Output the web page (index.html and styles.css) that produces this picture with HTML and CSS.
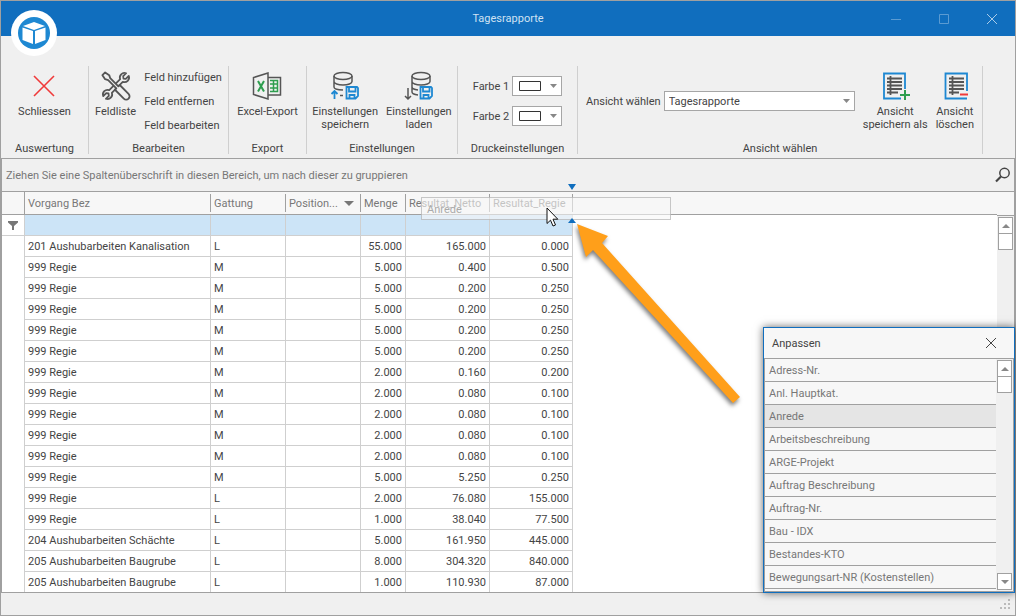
FILE: index.html
```html
<!DOCTYPE html>
<html lang="de">
  <head>
    <meta charset="UTF-8" />
    <meta name="viewport" content="width=device-width, initial-scale=1.0" />
    <title>Tagesrapporte</title>
    <link rel="stylesheet" href="styles.css">
  </head>
  <body>
    <div class="window">
      <header class="titlebar">
        <svg class="logo" viewBox="0 0 46 46" aria-hidden="true">
          <circle cx="23" cy="23" r="23" fill="#fff" />
          <circle cx="23" cy="23" r="16" fill="#1e88d2" />
          <path d="M23 12l11 4-11 4-11-4z M11.500 17.500l10.500 3.500v13l-10.500-4z M34.500 17.500l-10.500 3.500v13l10.500-4z" fill="#fff" />
        </svg>
        <h1 class="title">Tagesrapporte</h1>
        <div class="winButtons">
          <button type="button" aria-label="Minimieren"><svg viewBox="0 0 12 12"><path d="M1 6.500h10" /></svg></button>
          <button type="button" aria-label="Maximieren"><svg viewBox="0 0 12 12"><path d="M1.500 1.500h9v9h-9z" /></svg></button>
          <button type="button" class="winClose" aria-label="Fenster schliessen"><svg viewBox="0 0 12 12"><path d="M1 1l10 10M11 1L1 11" /></svg></button>
        </div>
      </header>

      <div class="ribbon">
        <section class="group group--close">
          <div class="groupContent">
            <button type="button" class="bigButton">
              <svg viewBox="0 0 32 32"><path d="M6 6l20 20M26 6L6 26" stroke="#f03a3a" stroke-width="1.600" /></svg>
              Schliessen
            </button>
          </div>
          <h2>Auswertung</h2>
        </section>

        <section class="group group--edit">
          <div class="groupContent">
            <button type="button" class="bigButton">
              <svg viewBox="0 0 32 32" stroke="#555" stroke-width="1.900" stroke-linejoin="round">
                <path transform="translate(16 16) rotate(45) scale(.92)" d="M-2-8.400A5 5 0 0 1-2-17.600V-13L0-11.500 2-13V-17.600A5 5 0 0 1 2-8.400V8.400A5 5 0 0 1 2 17.600V13L0 11.500-2 13V17.600A5 5 0 0 1-2 8.400z" />
                <path transform="translate(16 16) rotate(-45) scale(.96)" d="M-2-18H2L3-13 1.500-10V2H3.500V15a3.500 3.500 0 0 1-7 0V2H-1.500V-10L-3-13z" fill="#f0f0f0" />
              </svg>
              Feldliste
            </button>
            <div class="linkColumn">
              <button type="button">Feld hinzufügen</button>
              <button type="button">Feld entfernen</button>
              <button type="button">Feld bearbeiten</button>
            </div>
          </div>
          <h2>Bearbeiten</h2>
        </section>

        <section class="group group--export">
          <div class="groupContent">
            <button type="button" class="bigButton">
              <svg viewBox="0 0 32 32" stroke="#555" stroke-width="1.500">
                <path d="M17 3L2.500 7.500v17L17 29z M17 7.500h12.500v17.500H17" />
                <path d="M7 11l6 10.500M13 11L7 21.500" stroke="#2e9e4f" stroke-width="2" />
                <path d="M19 10.500h7.500v11H19M22.500 10.500v11M19 14h7.500M19 18h7.500" stroke="#2e9e4f" />
              </svg>
              Excel-Export
            </button>
          </div>
          <h2>Export</h2>
        </section>

        <section class="group group--settings">
          <div class="groupContent">
            <button type="button" class="bigButton">
              <svg viewBox="0 0 32 32" stroke="#555" stroke-width="1.500">
                <ellipse cx="14" cy="6" rx="9" ry="3.500" />
                <path d="M5 6v5.500c0 2 4 3.500 9 3.500s9-1.500 9-3.500V6M5 14v3c0 1.500 3 2.800 9 3M5 11v6M11 25.500h3" />
                <path d="M5.500 29v-8M2.500 24l3-3 3 3M17.500 17H28l1 1v8l-2.500 2.500h-9zM20 17v4.500h6.500V17M20.500 28.500V25h5v3.500" stroke="#1e88d2" stroke-width="1.800" />
              </svg>
              Einstellungen<br>speichern
            </button>
            <button type="button" class="bigButton">
              <svg viewBox="0 0 32 32" stroke="#555" stroke-width="1.500">
                <ellipse cx="18" cy="6" rx="9" ry="3.500" />
                <path d="M9 6v5.500c0 2 4 3.500 9 3.500s9-1.500 9-3.500V6M9 11v6c0 1.500 2 2.500 6 3M9 17v5c0 1.500 2 2.500 6 3M5 18v11M2 26l3 3 3-3" />
                <path d="M17.500 17H28l1 1v8l-2.500 2.500h-9zM20 17v4.500h6.500V17M20.500 28.500V25h5v3.500" stroke="#1e88d2" stroke-width="1.800" />
              </svg>
              Einstellungen<br>laden
            </button>
          </div>
          <h2>Einstellungen</h2>
        </section>

        <section class="group group--print">
          <div class="groupContent groupContent--rows">
            <div class="field">
              <label for="farbe1">Farbe 1</label>
              <select id="farbe1" class="colorSelect"><option value="#ffffff" aria-label="Weiss"></option></select>
            </div>
            <div class="field">
              <label for="farbe2">Farbe 2</label>
              <select id="farbe2" class="colorSelect"><option value="#ffffff" aria-label="Weiss"></option></select>
            </div>
          </div>
          <h2>Druckeinstellungen</h2>
        </section>

        <section class="group group--view">
          <div class="groupContent">
            <div class="field field--view">
              <label for="ansicht">Ansicht wählen</label>
              <select id="ansicht" class="viewSelect"><option>Tagesrapporte</option></select>
            </div>
            <button type="button" class="bigButton">
              <svg viewBox="0 0 32 32" stroke="#555" stroke-width="1.800">
                <path d="M26 19V3.500H5v25h17" stroke="#1e88d2" />
                <path d="M8 8.500h15M8 12h15M8 15.500h15M8 19h15M8 22.500h11M11.500 6v19" />
                <path d="M26 20v10M21 25h10" stroke="#2e9e4f" stroke-width="2" />
              </svg>
              Ansicht<br>speichern als
            </button>
            <button type="button" class="bigButton">
              <svg viewBox="0 0 32 32" stroke="#555" stroke-width="1.800">
                <path d="M28 21V3.500H6.500v25H28" stroke="#1e88d2" />
                <path d="M10 8.500h15M10 12h15M10 15.500h15M10 19h15M10 22.500h10M13.500 6v19" />
                <path d="M21 24.500h8" stroke="#f03a3a" stroke-width="2" />
              </svg>
              Ansicht<br>löschen
            </button>
          </div>
          <h2>Ansicht wählen</h2>
        </section>
      </div>

      <main class="grid">
        <div class="groupPanel">
          <span>Ziehen Sie eine Spaltenüberschrift in diesen Bereich, um nach dieser zu gruppieren</span>
          <button type="button" class="searchButton" aria-label="Suchen">
            <svg viewBox="0 0 16 16"><circle cx="9.500" cy="6" r="4.700" stroke-width="1.500" /><path d="M6 9.500L1 14.500" stroke-width="2.200" /></svg>
          </button>
        </div>

        <div class="gridBody">
          <table class="rows">
            <colgroup>
              <col class="colIndicator" />
              <col class="colVorgang" />
              <col class="colGattung" />
              <col class="colPosition" />
              <col class="colMenge" />
              <col class="colNetto" />
              <col class="colRegie" />
              <col />
            </colgroup>
            <thead>
              <tr>
                <th class="indicator"></th>
                <th>Vorgang Bez</th>
                <th>Gattung</th>
                <th><span class="sorted">Position... <i class="sortMark"></i></span></th>
                <th>Menge</th>
                <th>Resultat_Netto</th>
                <th>Resultat_Regie</th>
                <th class="filler"></th>
              </tr>
            </thead>
            <tbody>
              <tr class="filterRow">
                <td class="indicator"><svg viewBox="0 0 10 9"><path d="M0 0h10v1.500L6 5v4H4V5L0 1.500z" fill="#777" /></svg></td>
                <td></td><td></td><td></td><td></td><td></td><td></td><td class="filler"></td>
              </tr>
              <tr><td></td><td>201 Aushubarbeiten Kanalisation</td><td>L</td><td></td><td>55.000</td><td>165.000</td><td>0.000</td><td></td></tr>
              <tr><td></td><td>999 Regie</td><td>M</td><td></td><td>5.000</td><td>0.400</td><td>0.500</td><td></td></tr>
              <tr><td></td><td>999 Regie</td><td>M</td><td></td><td>5.000</td><td>0.200</td><td>0.250</td><td></td></tr>
              <tr><td></td><td>999 Regie</td><td>M</td><td></td><td>5.000</td><td>0.200</td><td>0.250</td><td></td></tr>
              <tr><td></td><td>999 Regie</td><td>M</td><td></td><td>5.000</td><td>0.200</td><td>0.250</td><td></td></tr>
              <tr><td></td><td>999 Regie</td><td>M</td><td></td><td>5.000</td><td>0.200</td><td>0.250</td><td></td></tr>
              <tr><td></td><td>999 Regie</td><td>M</td><td></td><td>2.000</td><td>0.160</td><td>0.200</td><td></td></tr>
              <tr><td></td><td>999 Regie</td><td>M</td><td></td><td>2.000</td><td>0.080</td><td>0.100</td><td></td></tr>
              <tr><td></td><td>999 Regie</td><td>M</td><td></td><td>2.000</td><td>0.080</td><td>0.100</td><td></td></tr>
              <tr><td></td><td>999 Regie</td><td>M</td><td></td><td>2.000</td><td>0.080</td><td>0.100</td><td></td></tr>
              <tr><td></td><td>999 Regie</td><td>M</td><td></td><td>2.000</td><td>0.080</td><td>0.100</td><td></td></tr>
              <tr><td></td><td>999 Regie</td><td>M</td><td></td><td>5.000</td><td>5.250</td><td>0.250</td><td></td></tr>
              <tr><td></td><td>999 Regie</td><td>L</td><td></td><td>2.000</td><td>76.080</td><td>155.000</td><td></td></tr>
              <tr><td></td><td>999 Regie</td><td>L</td><td></td><td>1.000</td><td>38.040</td><td>77.500</td><td></td></tr>
              <tr><td></td><td>204 Aushubarbeiten Schächte</td><td>L</td><td></td><td>5.000</td><td>161.950</td><td>445.000</td><td></td></tr>
              <tr><td></td><td>205 Aushubarbeiten Baugrube</td><td>L</td><td></td><td>8.000</td><td>304.320</td><td>840.000</td><td></td></tr>
              <tr><td></td><td>205 Aushubarbeiten Baugrube</td><td>L</td><td></td><td>1.000</td><td>110.930</td><td>87.000</td><td></td></tr>
            </tbody>
          </table>
          <div class="rail rail--grid">
            <i class="railArrow"></i>
            <i class="railThumb"></i>
          </div>
        </div>
      </main>

      <footer class="statusbar">
        <svg class="grip" viewBox="0 0 10 10"><path d="M8 0h2v2H8zM4 4h2v2H4zM8 4h2v2H8zM0 8h2v2H0zM4 8h2v2H4zM8 8h2v2H8z" fill="#bbb" /></svg>
      </footer>
    </div>

    <!-- dragged column header and drop marks -->
    <div class="dragGhost">Anrede</div>
    <i class="dropMark dropMark--top"></i>
    <i class="dropMark dropMark--bottom"></i>
    <svg class="pointer" viewBox="0 0 13 20"><path d="M1 1v15.500l3.500-3.300 2.500 5.800 2.500-1-2.500-5.800h4.800z" fill="#fff" stroke="#111" /></svg>
    <svg class="hintArrow" viewBox="0 0 180 200"><path d="M7 4l31 12-6 7 138 154-7 6L23 30l-7 7z" fill="#ff9f1a" /></svg>

    <aside class="chooser">
      <div class="chooserTitle">
        <h2>Anpassen</h2>
        <button type="button" aria-label="Schliessen"><svg viewBox="0 0 12 12"><path d="M1 1l10 10M11 1L1 11" /></svg></button>
      </div>
      <div class="chooserBody">
        <ul>
          <li>Adress-Nr.</li>
          <li>Anl. Hauptkat.</li>
          <li class="active">Anrede</li>
          <li>Arbeitsbeschreibung</li>
          <li>ARGE-Projekt</li>
          <li>Auftrag Beschreibung</li>
          <li>Auftrag-Nr.</li>
          <li>Bau - IDX</li>
          <li>Bestandes-KTO</li>
          <li>Bewegungsart-NR (Kostenstellen)</li>
        </ul>
        <div class="rail">
          <i class="railArrow"></i>
          <i class="railThumb"></i>
          <i class="railArrow railArrow--down"></i>
        </div>
      </div>
    </aside>
  </body>
</html>
```

FILE: styles.css
```css
* {
  box-sizing: border-box;
}

body {
  margin: 0;
  font-family: Tahoma, Roboto, "DejaVu Sans Condensed", sans-serif;
  font-size: 11px;
  line-height: 13px;
  color: #444;
}

h1,
h2 {
  margin: 0;
  font-size: 11px;
  font-weight: normal;
}

button,
select {
  font: inherit;
  color: inherit;
}

button {
  padding: 0;
  border: 0;
  background: none;
  white-space: nowrap;
}

svg {
  display: block;
  fill: none;
}

.window {
  display: flex;
  flex-direction: column;
  height: 100vh;
  border: 1px solid #a0a0a0;
  background-color: #f0f0f0;
}

/* title bar */
.titlebar {
  position: relative;
  display: grid;
  grid-template-columns: 1fr auto 1fr;
  align-items: center;
  height: 35px;
  flex: none;
  background-color: #106ebe;
  color: #cfe2f3;
}

.logo {
  position: absolute;
  left: 10px;
  top: 9px;
  width: 46px;
  height: 46px;
}

.title {
  grid-column: 2;
}

.winButtons {
  display: flex;
  justify-content: flex-end;
  gap: 36px;
  padding-right: 17px;
}

.winButtons svg {
  width: 12px;
  height: 12px;
  stroke: #5b9bd2;
}

.winClose svg {
  stroke: #a9cbe8;
}

/* ribbon */
.ribbon {
  display: flex;
  flex: none;
  height: 122px;
  padding: 30px 32px 0 0;
}

.group {
  display: flex;
  flex-direction: column;
  height: 88px;
  border-right: 1px solid #cfcfcf;
}

.group h2 {
  text-align: center;
}

.group--close {
  width: 88px;
}

.group--edit {
  width: 140px;
}

.group--export {
  width: 78px;
}

.group--settings {
  width: 151px;
}

.group--print {
  width: 120px;
}

.group--view {
  flex: 1;
}

.groupContent {
  display: flex;
  justify-content: center;
  align-items: flex-start;
  gap: 8px;
  height: 76px;
  flex: none;
}

.groupContent--rows {
  flex-direction: column;
  justify-content: flex-start;
  align-items: center;
  gap: 10px;
  padding-top: 10px;
}

.bigButton {
  display: flex;
  flex-direction: column;
  align-items: center;
  padding-top: 4px;
}

.bigButton svg {
  width: 32px;
  height: 32px;
  margin-bottom: 3px;
}

.group--view .groupContent {
  padding: 0 8px;
}

.linkColumn {
  display: flex;
  flex-direction: column;
  align-items: flex-start;
  gap: 11px;
  padding-top: 5px;
}

.field {
  display: flex;
  align-items: center;
  gap: 3px;
}

.field--view {
  flex: 1;
  padding-top: 25px;
}

.colorSelect,
.viewSelect {
  appearance: none;
  height: 20px;
  padding: 0 4px;
  border: 1px solid #a6a6a6;
  border-radius: 0;
  background-color: #fff;
  background-repeat: no-repeat;
  background-image: url("data:image/svg+xml,%3Csvg xmlns='http://www.w3.org/2000/svg' width='7' height='4'%3E%3Cpath d='M0 0h7L3.500 4z' fill='%23888'/%3E%3C/svg%3E");
  background-position: right 4px center;
}

.colorSelect {
  width: 50px;
  background-image:
    url("data:image/svg+xml,%3Csvg xmlns='http://www.w3.org/2000/svg' width='22' height='10'%3E%3Cpath d='M.500 .500h21v9h-21z' fill='white' stroke='%23333'/%3E%3C/svg%3E"),
    url("data:image/svg+xml,%3Csvg xmlns='http://www.w3.org/2000/svg' width='7' height='4'%3E%3Cpath d='M0 0h7L3.500 4z' fill='%23888'/%3E%3C/svg%3E");
  background-position: 6px center, right 4px center;
}

.viewSelect {
  flex: 1;
}

/* data grid */
.grid {
  display: flex;
  flex-direction: column;
  flex: 1;
  min-height: 0;
  border: 1px solid #a0a0a0;
  background-color: #fff;
}

.groupPanel {
  display: flex;
  justify-content: space-between;
  align-items: center;
  flex: none;
  height: 33px;
  padding: 0 3px 0 4px;
  border-bottom: 1px solid #a0a0a0;
  background-color: #f0f0f0;
  color: #777;
}

.searchButton svg {
  width: 16px;
  height: 16px;
  stroke: #444;
}

.gridBody {
  display: flex;
  flex: 1;
  min-height: 0;
  overflow: hidden;
}

.rows {
  flex: 1;
  align-self: flex-start;
  table-layout: fixed;
  border-collapse: separate;
  border-spacing: 0;
}

.colIndicator {
  width: 23px;
}

.colVorgang {
  width: 186px;
}

.colGattung,
.colPosition {
  width: 75px;
}

.colMenge {
  width: 45px;
}

.colNetto {
  width: 84px;
}

.colRegie {
  width: 83px;
}

.rows th {
  height: 23px;
  padding: 0 3px;
  border-bottom: 1px solid #a0a0a0;
  background: linear-gradient(#a0a0a0, #a0a0a0) right center / 1px 18px no-repeat #f7f7f7;
  font-weight: normal;
  text-align: left;
  white-space: nowrap;
  color: #777;
}

.rows th.indicator {
  border-right: 1px solid #a0a0a0;
  background: #f7f7f7;
}

.rows th.filler {
  background: #f7f7f7;
}

.sorted {
  display: flex;
  justify-content: space-between;
  align-items: center;
}

.sortMark {
  border: 5px solid transparent;
  border-top-color: #777;
  border-bottom: 0;
  margin-right: 4px;
}

.rows td {
  height: 21px;
  padding: 0 3px;
  border-right: 1px solid #cfcfcf;
  border-bottom: 1px solid #cfcfcf;
  white-space: nowrap;
}

.rows td:nth-child(n + 5) {
  text-align: right;
}

.rows td:first-child {
  border-bottom: 0;
}

.rows td:last-child {
  border: 0;
}

.filterRow td {
  background-color: #cce4f7;
}

.rows .filterRow .indicator {
  padding-left: 6px;
  border-bottom: 1px solid #cfcfcf;
  background-color: #fff;
}

.filterRow .filler {
  background-color: #fff;
}

.filterRow svg {
  width: 10px;
  height: 9px;
}

/* scroll rails */
.rail {
  display: flex;
  flex-direction: column;
  flex: none;
  width: 17px;
  padding: 1px;
  background-color: #f0f0f0;
}

.rail--grid {
  padding-top: 0;
}

.rail--grid::before {
  content: "";
  height: 23px;
  margin: 0 -1px 1px;
  border-bottom: 1px solid #a0a0a0;
  background-color: #f7f7f7;
}

.railArrow,
.railThumb {
  height: 17px;
  border: 1px solid #a0a0a0;
  background-color: #fff;
}

.railThumb {
  margin-top: -1px;
}

.railArrow {
  display: flex;
  justify-content: center;
  align-items: center;
}

.railArrow::before {
  content: "";
  border: 4px solid transparent;
  border-bottom-color: #888;
  border-top: 0;
}

.railArrow--down {
  margin-top: auto;
}

.railArrow--down::before {
  border-top: 4px solid #888;
  border-bottom: 0;
}

/* status bar */
.statusbar {
  display: flex;
  justify-content: flex-end;
  align-items: center;
  flex: none;
  height: 22px;
  padding-right: 5px;
}

.grip {
  width: 10px;
  height: 10px;
}

/* drag feedback */
.dragGhost {
  position: absolute;
  left: 421px;
  top: 197px;
  width: 250px;
  height: 23px;
  padding: 5px;
  border: 1px solid rgba(150, 150, 150, 0.5);
  background-color: rgba(247, 247, 247, 0.6);
  color: #aaa;
}

.dropMark {
  position: absolute;
  left: 568px;
  border: 4px solid transparent;
}

.dropMark--top {
  top: 184px;
  border-top: 6px solid #106ebe;
  border-bottom: 0;
}

.dropMark--bottom {
  top: 218px;
  border-bottom: 5px solid #106ebe;
  border-top: 0;
}

.pointer {
  position: absolute;
  left: 546px;
  top: 207px;
  width: 13px;
  height: 20px;
}

.hintArrow {
  position: absolute;
  left: 570px;
  top: 220px;
  width: 180px;
  height: 200px;
  filter: drop-shadow(-1px 3px 2px rgba(0, 0, 0, 0.5));
}

/* column chooser */
.chooser {
  position: absolute;
  right: 1px;
  bottom: 23px;
  width: 252px;
  border: 1px solid #106ebe;
  background-color: #f7f7f7;
  box-shadow: 0 0 8px rgba(0, 0, 0, 0.6);
}

.chooserTitle {
  display: flex;
  justify-content: space-between;
  align-items: center;
  height: 30px;
  padding: 0 17px 0 8px;
}

.chooserTitle svg {
  width: 12px;
  height: 12px;
  stroke: #444;
}

.chooserBody {
  display: flex;
  height: 234px;
  border: 1px solid #a0a0a0;
}

.chooserBody ul {
  flex: 1;
  margin: 0;
  padding: 0;
  list-style: none;
  color: #777;
}

.chooserBody li {
  height: 23px;
  padding: 5px 4px;
  border-bottom: 1px solid #a0a0a0;
}

.chooserBody .active {
  background-color: #e5e5e5;
}
```
